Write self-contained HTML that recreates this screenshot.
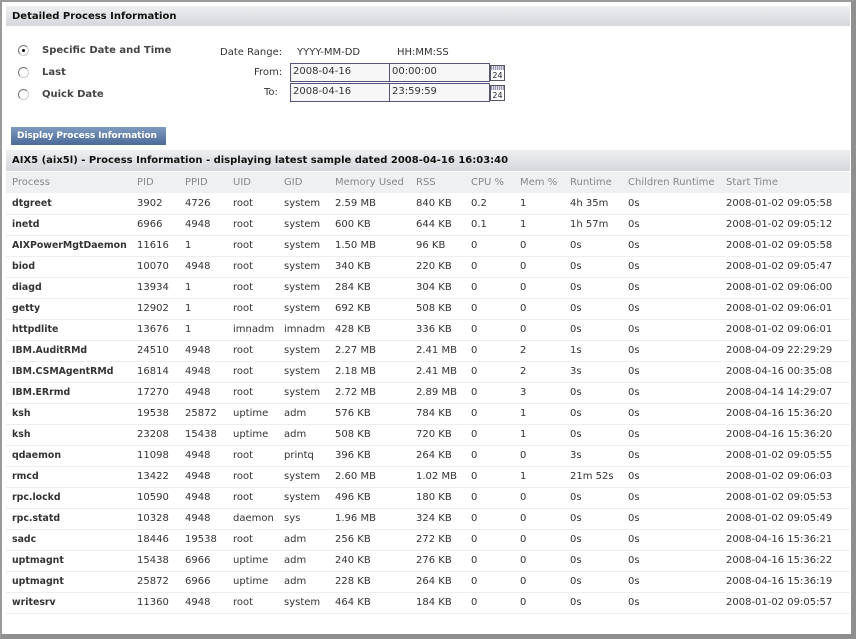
<!DOCTYPE html>
<html><head><meta charset="utf-8"><style>
*{margin:0;padding:0;box-sizing:border-box}
body{width:856px;height:639px;background:#fff;font-family:"DejaVu Sans","Liberation Sans",sans-serif;font-size:10px;color:#333;position:relative;overflow:hidden}
.frame{position:absolute;left:0;top:0;width:856px;height:639px;border-top:2px solid #9a9a9a;border-left:2px solid #9a9a9a;border-right:5px solid #8f8f8f;border-bottom:5px solid #8f8f8f}
.bar{position:absolute;left:6px;width:844px;background:linear-gradient(#eef0f2,#d4d7db);font-weight:bold;color:#111;font-size:10px;padding-left:6px}
.a{position:absolute;white-space:nowrap}
.b{font-weight:bold;color:#444}
.inp{position:absolute;height:19px;border:1px solid #55557a;background:#f7f7f7;padding:2px 0 0 2px;font-size:10px;color:#333}
.cal{position:absolute;width:15px;height:16px;border:1px solid #556;background:#fff;font-size:8px;text-align:center;padding-top:5px;line-height:9px;color:#223}
.cal:before{content:"";position:absolute;left:0;right:0;top:0;height:4px;background:repeating-linear-gradient(90deg,#99a 0 1px,#dde 1px 2px)}
.radio{position:absolute;width:11px;height:11px;border-radius:50%;border:1px solid #777;border-right-color:#ccc;border-bottom-color:#ccc;background:#fff}
.radio.on:after{content:"";position:absolute;left:3px;top:3px;width:3px;height:3px;background:#111;border-radius:50%}
table{position:absolute;left:6px;top:172px;width:844px;border-collapse:collapse}
td{height:21px;border-bottom:1px solid #eeeeee;white-space:nowrap;padding:0;vertical-align:middle}
tr.h td{background:#eef0f2;color:#888;height:21px;border-bottom:none}
td.p{font-weight:bold;color:#333;padding-left:6px;font-size:9.4px}
tr.h td.p{font-weight:normal;color:#888;font-size:10px}
</style></head><body>
<div class="frame"></div>
<div class="bar" style="top:6px;height:20px;line-height:21px">Detailed Process Information</div>

<div class="radio on" style="left:18px;top:45px"></div>
<div class="radio" style="left:18px;top:67px"></div>
<div class="radio" style="left:18px;top:89px"></div>
<div class="a b" style="left:42px;top:45px">Specific Date and Time</div>
<div class="a b" style="left:42px;top:67px">Last</div>
<div class="a b" style="left:42px;top:89px">Quick Date</div>

<div class="a" style="left:220px;top:47px">Date Range:</div>
<div class="a" style="left:297px;top:47px">YYYY-MM-DD</div>
<div class="a" style="left:397px;top:47px">HH:MM:SS</div>
<div class="a" style="left:254px;top:67px">From:</div>
<div class="a" style="left:264px;top:87px">To:</div>
<div class="inp" style="left:290px;top:63px;width:100px">2008-04-16</div>
<div class="inp" style="left:389px;top:63px;width:101px">00:00:00</div>
<div class="cal" style="left:490px;top:65px">24</div>
<div class="inp" style="left:290px;top:83px;width:100px">2008-04-16</div>
<div class="inp" style="left:389px;top:83px;width:101px">23:59:59</div>
<div class="cal" style="left:490px;top:85px">24</div>

<div class="a" style="left:11px;top:127px;width:155px;height:18px;background:linear-gradient(#7e9ac0,#4c6a98);color:#fff;font-weight:bold;line-height:18px;padding-left:6px;font-size:9px;letter-spacing:-0.1px">Display Process Information</div>

<div class="bar" style="top:150px;height:21px;line-height:22px">AIX5 (aix5l) - Process Information - displaying latest sample dated 2008-04-16 16:03:40</div>

<table>
<colgroup><col style="width:131px"><col style="width:48px"><col style="width:48px"><col style="width:51px"><col style="width:51px"><col style="width:81px"><col style="width:55px"><col style="width:49px"><col style="width:50px"><col style="width:58px"><col style="width:98px"><col></colgroup>
<tr class="h"><td class="p">Process</td><td>PID</td><td>PPID</td><td>UID</td><td>GID</td><td>Memory Used</td><td>RSS</td><td>CPU %</td><td>Mem %</td><td>Runtime</td><td>Children Runtime</td><td>Start Time</td></tr>
<tr><td class="p">dtgreet</td><td>3902</td><td>4726</td><td>root</td><td>system</td><td>2.59 MB</td><td>840 KB</td><td>0.2</td><td>1</td><td>4h 35m</td><td>0s</td><td>2008-01-02 09:05:58</td></tr>
<tr><td class="p">inetd</td><td>6966</td><td>4948</td><td>root</td><td>system</td><td>600 KB</td><td>644 KB</td><td>0.1</td><td>1</td><td>1h 57m</td><td>0s</td><td>2008-01-02 09:05:12</td></tr>
<tr><td class="p">AIXPowerMgtDaemon</td><td>11616</td><td>1</td><td>root</td><td>system</td><td>1.50 MB</td><td>96 KB</td><td>0</td><td>0</td><td>0s</td><td>0s</td><td>2008-01-02 09:05:58</td></tr>
<tr><td class="p">biod</td><td>10070</td><td>4948</td><td>root</td><td>system</td><td>340 KB</td><td>220 KB</td><td>0</td><td>0</td><td>0s</td><td>0s</td><td>2008-01-02 09:05:47</td></tr>
<tr><td class="p">diagd</td><td>13934</td><td>1</td><td>root</td><td>system</td><td>284 KB</td><td>304 KB</td><td>0</td><td>0</td><td>0s</td><td>0s</td><td>2008-01-02 09:06:00</td></tr>
<tr><td class="p">getty</td><td>12902</td><td>1</td><td>root</td><td>system</td><td>692 KB</td><td>508 KB</td><td>0</td><td>0</td><td>0s</td><td>0s</td><td>2008-01-02 09:06:01</td></tr>
<tr><td class="p">httpdlite</td><td>13676</td><td>1</td><td>imnadm</td><td>imnadm</td><td>428 KB</td><td>336 KB</td><td>0</td><td>0</td><td>0s</td><td>0s</td><td>2008-01-02 09:06:01</td></tr>
<tr><td class="p">IBM.AuditRMd</td><td>24510</td><td>4948</td><td>root</td><td>system</td><td>2.27 MB</td><td>2.41 MB</td><td>0</td><td>2</td><td>1s</td><td>0s</td><td>2008-04-09 22:29:29</td></tr>
<tr><td class="p">IBM.CSMAgentRMd</td><td>16814</td><td>4948</td><td>root</td><td>system</td><td>2.18 MB</td><td>2.41 MB</td><td>0</td><td>2</td><td>3s</td><td>0s</td><td>2008-04-16 00:35:08</td></tr>
<tr><td class="p">IBM.ERrmd</td><td>17270</td><td>4948</td><td>root</td><td>system</td><td>2.72 MB</td><td>2.89 MB</td><td>0</td><td>3</td><td>0s</td><td>0s</td><td>2008-04-14 14:29:07</td></tr>
<tr><td class="p">ksh</td><td>19538</td><td>25872</td><td>uptime</td><td>adm</td><td>576 KB</td><td>784 KB</td><td>0</td><td>1</td><td>0s</td><td>0s</td><td>2008-04-16 15:36:20</td></tr>
<tr><td class="p">ksh</td><td>23208</td><td>15438</td><td>uptime</td><td>adm</td><td>508 KB</td><td>720 KB</td><td>0</td><td>1</td><td>0s</td><td>0s</td><td>2008-04-16 15:36:20</td></tr>
<tr><td class="p">qdaemon</td><td>11098</td><td>4948</td><td>root</td><td>printq</td><td>396 KB</td><td>264 KB</td><td>0</td><td>0</td><td>3s</td><td>0s</td><td>2008-01-02 09:05:55</td></tr>
<tr><td class="p">rmcd</td><td>13422</td><td>4948</td><td>root</td><td>system</td><td>2.60 MB</td><td>1.02 MB</td><td>0</td><td>1</td><td>21m 52s</td><td>0s</td><td>2008-01-02 09:06:03</td></tr>
<tr><td class="p">rpc.lockd</td><td>10590</td><td>4948</td><td>root</td><td>system</td><td>496 KB</td><td>180 KB</td><td>0</td><td>0</td><td>0s</td><td>0s</td><td>2008-01-02 09:05:53</td></tr>
<tr><td class="p">rpc.statd</td><td>10328</td><td>4948</td><td>daemon</td><td>sys</td><td>1.96 MB</td><td>324 KB</td><td>0</td><td>0</td><td>0s</td><td>0s</td><td>2008-01-02 09:05:49</td></tr>
<tr><td class="p">sadc</td><td>18446</td><td>19538</td><td>root</td><td>adm</td><td>256 KB</td><td>272 KB</td><td>0</td><td>0</td><td>0s</td><td>0s</td><td>2008-04-16 15:36:21</td></tr>
<tr><td class="p">uptmagnt</td><td>15438</td><td>6966</td><td>uptime</td><td>adm</td><td>240 KB</td><td>276 KB</td><td>0</td><td>0</td><td>0s</td><td>0s</td><td>2008-04-16 15:36:22</td></tr>
<tr><td class="p">uptmagnt</td><td>25872</td><td>6966</td><td>uptime</td><td>adm</td><td>228 KB</td><td>264 KB</td><td>0</td><td>0</td><td>0s</td><td>0s</td><td>2008-04-16 15:36:19</td></tr>
<tr><td class="p">writesrv</td><td>11360</td><td>4948</td><td>root</td><td>system</td><td>464 KB</td><td>184 KB</td><td>0</td><td>0</td><td>0s</td><td>0s</td><td>2008-01-02 09:05:57</td></tr>
</table>
</body></html>
